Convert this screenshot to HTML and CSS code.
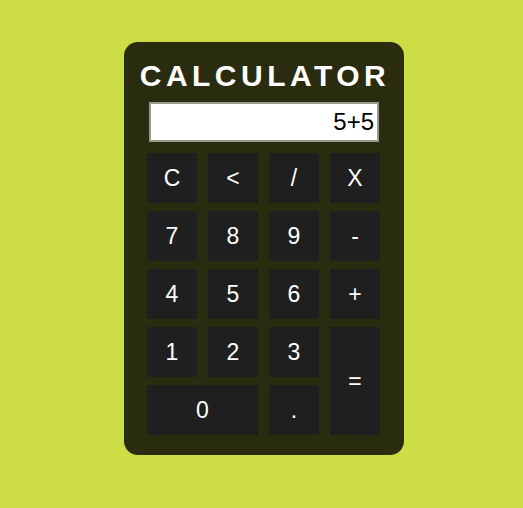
FILE: index.html
```html
<!DOCTYPE html>
<html>
<head>
<meta charset="utf-8">
<link rel="stylesheet" href="styles.css">
</head>
<body>
<div class="page">
  <div class="calc">
    <h1 class="title">CALCULATOR</h1>
    <div class="display">5+5</div>
    <div class="keys">
      <div class="key">C</div>
      <div class="key">&lt;</div>
      <div class="key">/</div>
      <div class="key">X</div>
      <div class="key">7</div>
      <div class="key">8</div>
      <div class="key">9</div>
      <div class="key">-</div>
      <div class="key">4</div>
      <div class="key">5</div>
      <div class="key">6</div>
      <div class="key">+</div>
      <div class="key">1</div>
      <div class="key">2</div>
      <div class="key">3</div>
      <div class="key key-eq">=</div>
      <div class="key key-zero">0</div>
      <div class="key">.</div>
    </div>
  </div>
</div>
</body>
</html>
```
FILE: styles.css
```css
html, body {
  margin: 0;
  padding: 0;
}
body {
  background: #cddd45;
  font-family: "Liberation Sans", Arial, sans-serif;
  width: 523px;
  height: 508px;
  overflow: hidden;
}
.page {
  padding: 42px 0 0 124px;
}
.calc {
  width: 280px;
  box-sizing: border-box;
  background: #2a2c0f;
  border-radius: 14px;
  padding: 17px 24px 20px 23px;
  display: flex;
  flex-direction: column;
}
.title {
  margin: 0 -23px 0 -24px;
  font-size: 30px;
  font-weight: bold;
  color: #fff;
  letter-spacing: 4.5px;
  text-align: center;
  line-height: 34px;
  padding-left: 4px;
}
.display {
  margin: 9px 0 0 2px;
  width: 230px;
  height: 40px;
  box-sizing: border-box;
  background: #fff;
  border: 2px solid #9a9a8c;
  color: #000;
  font-size: 24px;
  line-height: 36px;
  text-align: right;
  padding-right: 3px;
}
.keys {
  margin-top: 11px;
  display: grid;
  grid-template-columns: repeat(4, 50px);
  grid-auto-rows: 50px;
  column-gap: 11px;
  row-gap: 8px;
}
.key {
  background: #1f1f1f;
  color: #fff;
  font-size: 23px;
  display: flex;
  align-items: center;
  justify-content: center;
}
.key-eq {
  grid-column: 4;
  grid-row: 4 / span 2;
}
.key-zero {
  grid-column: 1 / span 2;
}
```
